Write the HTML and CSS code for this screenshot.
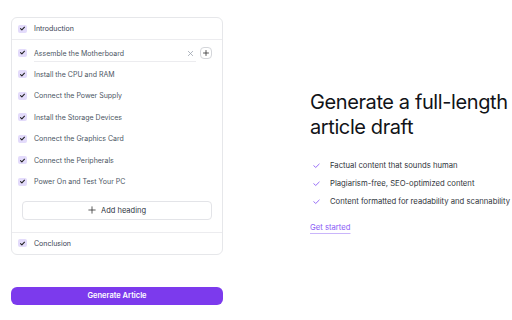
FILE: index.html
```html
<!DOCTYPE html>
<html>
<head>
<meta charset="utf-8">
<link rel="stylesheet" href="styles.css">
</head>
<body>
<div class="page">
  <div class="left">
    <div class="card">
      <div class="row head-row">
        <span class="cb"><svg viewBox="0 0 10 10"><path d="M2.8 5.2 L4.3 6.6 L7.2 3.6" fill="none" stroke="#222" stroke-width="1.2" stroke-linecap="round" stroke-linejoin="round"/></svg></span>
        <span class="label">Introduction</span>
      </div>
      <div class="body">
        <div class="row editing">
          <span class="cb"><svg viewBox="0 0 10 10"><path d="M2.8 5.2 L4.3 6.6 L7.2 3.6" fill="none" stroke="#222" stroke-width="1.2" stroke-linecap="round" stroke-linejoin="round"/></svg></span>
          <span class="field">
            <span class="label">Assemble the Motherboard</span>
            <svg class="x" viewBox="0 0 8 8"><path d="M1.5 1.5 L6.5 6.5 M6.5 1.5 L1.5 6.5" stroke="#9ca3af" stroke-width="0.9" stroke-linecap="round"/></svg>
          </span>
          <span class="plus"><svg viewBox="0 0 8 8"><path d="M4 1.5 V6.5 M1.5 4 H6.5" stroke="#444" stroke-width="0.9" stroke-linecap="round"/></svg></span>
        </div>
        <div class="row">
          <span class="cb"><svg viewBox="0 0 10 10"><path d="M2.8 5.2 L4.3 6.6 L7.2 3.6" fill="none" stroke="#222" stroke-width="1.2" stroke-linecap="round" stroke-linejoin="round"/></svg></span>
          <span class="label">Install the CPU and RAM</span>
        </div>
        <div class="row">
          <span class="cb"><svg viewBox="0 0 10 10"><path d="M2.8 5.2 L4.3 6.6 L7.2 3.6" fill="none" stroke="#222" stroke-width="1.2" stroke-linecap="round" stroke-linejoin="round"/></svg></span>
          <span class="label">Connect the Power Supply</span>
        </div>
        <div class="row">
          <span class="cb"><svg viewBox="0 0 10 10"><path d="M2.8 5.2 L4.3 6.6 L7.2 3.6" fill="none" stroke="#222" stroke-width="1.2" stroke-linecap="round" stroke-linejoin="round"/></svg></span>
          <span class="label">Install the Storage Devices</span>
        </div>
        <div class="row">
          <span class="cb"><svg viewBox="0 0 10 10"><path d="M2.8 5.2 L4.3 6.6 L7.2 3.6" fill="none" stroke="#222" stroke-width="1.2" stroke-linecap="round" stroke-linejoin="round"/></svg></span>
          <span class="label">Connect the Graphics Card</span>
        </div>
        <div class="row">
          <span class="cb"><svg viewBox="0 0 10 10"><path d="M2.8 5.2 L4.3 6.6 L7.2 3.6" fill="none" stroke="#222" stroke-width="1.2" stroke-linecap="round" stroke-linejoin="round"/></svg></span>
          <span class="label">Connect the Peripherals</span>
        </div>
        <div class="row">
          <span class="cb"><svg viewBox="0 0 10 10"><path d="M2.8 5.2 L4.3 6.6 L7.2 3.6" fill="none" stroke="#222" stroke-width="1.2" stroke-linecap="round" stroke-linejoin="round"/></svg></span>
          <span class="label">Power On and Test Your PC</span>
        </div>
        <div class="add">
          <svg viewBox="0 0 10 10"><path d="M5 1 V9 M1 5 H9" stroke="#333" stroke-width="1" stroke-linecap="round"/></svg>
          <span>Add heading</span>
        </div>
      </div>
      <div class="row foot-row">
        <span class="cb"><svg viewBox="0 0 10 10"><path d="M2.8 5.2 L4.3 6.6 L7.2 3.6" fill="none" stroke="#222" stroke-width="1.2" stroke-linecap="round" stroke-linejoin="round"/></svg></span>
        <span class="label">Conclusion</span>
      </div>
    </div>
    <button class="generate">Generate Article</button>
  </div>
  <div class="right">
    <h1 class="title">Generate a full-length article draft</h1>
    <ul class="features">
      <li><svg viewBox="0 0 10 10"><path d="M2 5.3 L4.2 7.2 L8 3.4" fill="none" stroke="#8b5cf6" stroke-width="1" stroke-linecap="round" stroke-linejoin="round"/></svg><span>Factual content that sounds human</span></li>
      <li><svg viewBox="0 0 10 10"><path d="M2 5.3 L4.2 7.2 L8 3.4" fill="none" stroke="#8b5cf6" stroke-width="1" stroke-linecap="round" stroke-linejoin="round"/></svg><span>Plagiarism-free, SEO-optimized content</span></li>
      <li><svg viewBox="0 0 10 10"><path d="M2 5.3 L4.2 7.2 L8 3.4" fill="none" stroke="#8b5cf6" stroke-width="1" stroke-linecap="round" stroke-linejoin="round"/></svg><span>Content formatted for readability and scannability</span></li>
    </ul>
    <a class="start" href="#">Get started</a>
  </div>
</div>
</body>
</html>
```
FILE: styles.css
```css
* { box-sizing: border-box; }
html, body { margin: 0; padding: 0; background: #fff; }
body { font-family: Inter, "Noto Sans", sans-serif; color: #4b5563; }
.page { display: flex; width: 512px; height: 320px; }
.left { width: 212px; flex: none; margin-left: 11px; padding-top: 17px; display: flex; flex-direction: column; }
.card { border: 1px solid #e6e7ea; border-radius: 6px; background: #fff; }
.row { display: flex; align-items: center; height: 21.5px; padding-left: 6px; font-size: 7px; }
.head-row { height: 22px; border-bottom: 1px solid #ececef; color: #374151; }
.foot-row { height: 22px; border-top: 1px solid #ececef; color: #374151; }
.cb { width: 9px; height: 8px; border-radius: 2px; background: #e3dbfb; display: flex; align-items: center; justify-content: center; margin-right: 7px; flex: none; }
.cb svg { width: 9px; height: 9px; }
.body { padding: 2px 0 12px; }
.label { white-space: nowrap; }
.field { flex: 1; display: flex; align-items: center; justify-content: space-between; height: 16px; margin-top: 2px; border-bottom: 1px solid #ececef; padding-right: 2px; }
.x { width: 7px; height: 7px; }
.plus { width: 12px; height: 12px; border: 1px solid #d4d6da; border-radius: 4px; display: flex; align-items: center; justify-content: center; margin: 0 10px 0 4px; flex: none; }
.plus svg { width: 8px; height: 8px; }
.add { margin: 8px 10px 0; height: 19px; border: 1px solid #e3e4e8; border-radius: 4px; display: flex; align-items: center; justify-content: center; gap: 5px; font-size: 7.5px; color: #2f3542; }
.add svg { width: 8px; height: 8px; }
.generate { margin-top: 32px; height: 18px; border: none; border-radius: 6px; background: #7c3aed; color: #fff; font-family: Inter, sans-serif; font-size: 7.5px; font-weight: 600; padding: 0; }
.right { flex: 1; min-width: 0; margin-left: 87px; display: flex; flex-direction: column; justify-content: center; padding-top: 2px; }
.title { margin: 0; font-size: 20px; line-height: 25px; font-weight: 400; color: #111318; letter-spacing: -0.4px; }
.features { list-style: none; margin: 16px 0 0; padding: 0; }
.features li { display: flex; align-items: center; height: 18px; font-size: 7.7px; color: #30343b; white-space: nowrap; }
.features svg { width: 9px; height: 9px; margin: 0 9px 0 2px; flex: none; }
.start { margin-top: 13px; font-size: 7.7px; color: #8b5cf6; text-decoration: underline; text-decoration-color: #c9b5fb; text-underline-offset: 3px; align-self: flex-start; }
```
